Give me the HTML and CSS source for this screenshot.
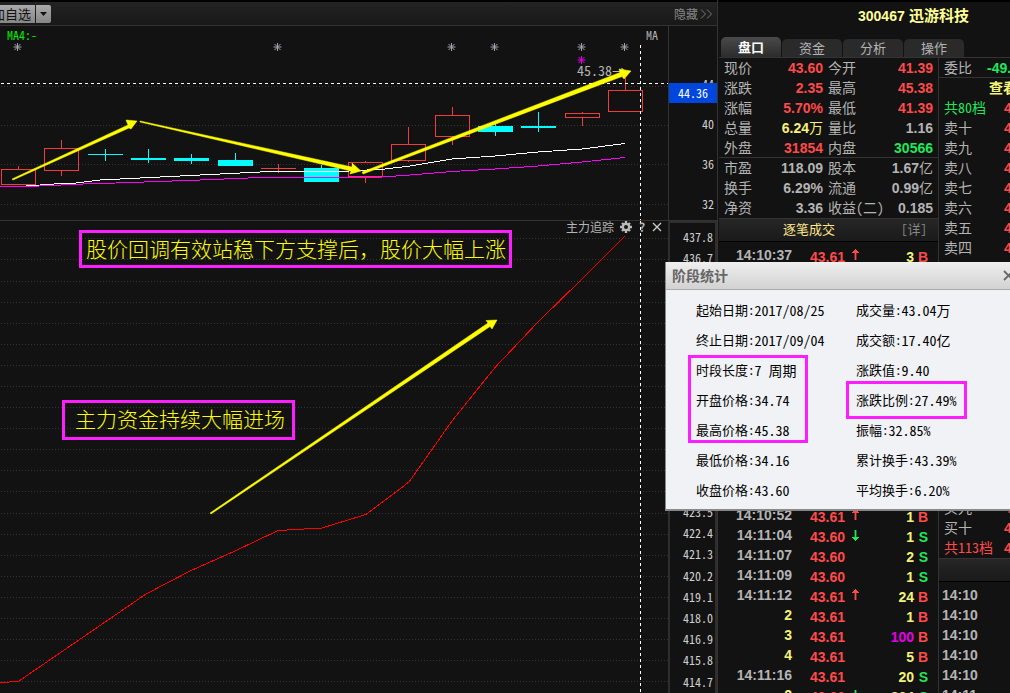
FILE: index.html
```html
<!DOCTYPE html>
<html lang="zh-CN">
<head>
<meta charset="utf-8">
<title>300467 迅游科技</title>
<link rel="stylesheet" href="styles.css">
</head>
<body>
<div class="app">
  <main class="charts">
    <header class="toolbar">
      <div class="fav">
        <button class="btn fav-add">加自选</button><button class="btn fav-more" aria-label="更多"><svg width="7" height="4" viewBox="0 0 7 4"><path d="M0 0h7L3.500 4z" fill="#111"/></svg></button>
      </div>
      <button class="hide-btn">隐藏<svg width="13" height="10" viewBox="0 0 13 10" fill="none" stroke="#777"><path d="M1 0.500 5.500 5 1 9.500M7 0.500 11.500 5 7 9.500"/></svg></button>
    </header>

    <section class="panel price">
      <div class="plot">
        <svg class="canvas" viewBox="0 26 668 194" preserveAspectRatio="xMinYMin slice">
          <defs>
            <g id="star" fill="none"><path d="M0-4V4M-4 0H4M-3-3 3 3M3-3-3 3"/></g>
          </defs>
          <g class="grid"><path d="M1 86.500H668M1 125.500H668M1 164.500H668M1 204.500H668"/></g>
          <g stroke="#a0a4aa" stroke-width="1">
            <use href="#star" x="17.500" y="47"/><use href="#star" x="277.500" y="47"/><use href="#star" x="451.500" y="47"/><use href="#star" x="494.500" y="47"/><use href="#star" x="581.500" y="47"/><use href="#star" x="624.500" y="47"/>
          </g>
          <use href="#star" x="581.500" y="60" stroke="#e000e0"/>
          <g class="up">
            <path d="M18.500 166V169M61.500 140V148M61.500 171V176M278.500 164V173M365.500 161V162M365.500 177V183M408.500 127V144M408.500 161V162M452.500 107V115M452.500 137V145M582.500 112V113M582.500 118V126M625.500 78V90M261 168.500H296"/>
            <path d="M1.500 169.500h34v15h-34zM44.500 148.500h34v22h-34zM348.500 162.500h34v14h-34zM391.500 144.500h34v16h-34zM435.500 115.500h34v21h-34zM565.500 113.500h34v4h-34zM608.500 90.500h34v21h-34z"/>
          </g>
          <g class="down">
            <path d="M105 149h1v12h-1zM88 154h35v1H88zM148 149h1v14h-1zM131 158h35v2h-35zM191 154h1v10h-1zM174 158h35v3h-35zM235 153h1v8h-1zM218 160h35v6h-35zM321 165h1v4h-1zM304 168h35v14h-35zM495 124h1v12h-1zM478 126h35v6h-35zM538 112h1v20h-1zM521 126h35v2h-35z"/>
          </g>
          <path class="ma white" d="M26 186 54 184 76 183 100 180 180 176 270 171.500 305 171.500 340 171.500 385 169 410 166 452 159 495 156 538 152 582 149 625 143.500"/>
          <path class="ma pink" d="M0 186.500 28 186.500 83 184 116 183 200 180 260 177.500 375 177.500 410 175 452 171.500 495 169 538 166 582 162 625 157.500"/>
          <path class="cross" d="M1 83.500H668M640.500 45V220"/>
          <text class="peak" x="577" y="76">45.38→</text>
          <g class="arrow">
            <path d="M12 179 128 125 126 120 137 121 131 129 129 128 13 180Z"/>
            <path d="M140 121 352 167 352 163 361 171 350 174 351 171 140 122Z"/>
            <path d="M362 172 620 72.500 619 69 631 71 624 79 622 76.500 363 174Z"/>
          </g>
        </svg>
        <span class="ma-label">MA4:-</span>
        <span class="ma-menu">MA</span>
      </div>
      <div class="axis price-axis">
        <span class="tick">44</span><span class="tick">40</span><span class="tick">36</span><span class="tick">32</span>
        <span class="cursor-price">44.36</span>
      </div>
    </section>

    <section class="panel tracker">
      <div class="plot">
        <svg class="canvas" viewBox="0 221 668 472" preserveAspectRatio="xMinYMin slice">
          <g class="grid"><path d="M1 238.500H668M1 259.500H668M1 281.500H668M1 302.500H668M1 323.500H668M1 344.500H668M1 365.500H668M1 386.500H668M1 407.500H668M1 428.500H668M1 449.500H668M1 470.500H668M1 491.500H668M1 513.500H668M1 534.500H668M1 555.500H668M1 576.500H668M1 597.500H668M1 618.500H668M1 639.500H668M1 660.500H668M1 681.500H668"/></g>
          <path class="flow" d="M0 683 19 681 146 594 190 571 235 551 278 530.500 322 528 366 514.500 409 482 452 421 495 367.500 538 322 582 279 625 236"/>
          <path class="cross" d="M640.500 221V693"/>
          <g class="arrow"><path d="M210 513 488 323 486 320.500 497 320 492 329 490 326.500 211 514Z"/></g>
        </svg>
        <div class="tools">
          <span>主力追踪</span>
          <button class="icon" aria-label="设置"><svg width="12" height="12" viewBox="-6 -6 12 12"><g stroke="#bbb" stroke-width="2.400"><path d="M0-6V6M-6 0H6M-4-4 4 4M4-4-4 4"/></g><circle r="3.100" fill="#151515" stroke="#bbb" stroke-width="2.200"/></svg></button>
          <button class="icon help" aria-label="帮助">?</button>
          <button class="icon" aria-label="关闭"><svg width="10" height="10" viewBox="0 0 10 10"><path d="M1 1 9 9M9 1 1 9" stroke="#ccc" stroke-width="1.300"/></svg></button>
        </div>
        <p class="note note-top">股价回调有效站稳下方支撑后，股价大幅上涨</p>
        <p class="note note-mid">主力资金持续大幅进场</p>
      </div>
      <div class="axis tracker-axis">
        <span>437.8</span><span>436.7</span><span>435.6</span><span>434.5</span><span>433.4</span><span>432.3</span><span>431.2</span><span>430.1</span><span>429.0</span><span>427.9</span><span>426.8</span><span>425.7</span><span>424.6</span><span>423.5</span><span>422.4</span><span>421.3</span><span>420.2</span><span>419.1</span><span>418.0</span><span>416.9</span><span>415.8</span><span>414.7</span>
      </div>
    </section>
  </main>

  <aside class="side">
    <h1 class="stock"><span>300467</span> 迅游科技</h1>
    <nav class="tabs">
      <button class="tab active">盘口</button><button class="tab">资金</button><button class="tab">分析</button><button class="tab">操作</button>
    </nav>
    <div class="cols">
      <section class="quote">
        <dl class="facts">
          <dt>现价</dt><dd class="r">43.60</dd><dt>今开</dt><dd class="r">41.39</dd>
          <dt>涨跌</dt><dd class="r">2.35</dd><dt>最高</dt><dd class="r">45.38</dd>
          <dt>涨幅</dt><dd class="r">5.70%</dd><dt>最低</dt><dd class="r">41.39</dd>
          <dt>总量</dt><dd class="y">6.24<i>万</i></dd><dt>量比</dt><dd>1.16</dd>
          <dt>外盘</dt><dd class="r">31854</dd><dt>内盘</dt><dd class="g">30566</dd>
        </dl>
        <dl class="facts more">
          <dt>市盈</dt><dd>118.09</dd><dt>股本</dt><dd>1.67<i>亿</i></dd>
          <dt>换手</dt><dd>6.29%</dd><dt>流通</dt><dd>0.99<i>亿</i></dd>
          <dt>净资</dt><dd>3.36</dd><dt>收益(二)</dt><dd>0.185</dd>
        </dl>
        <div class="band"><h2>逐笔成交</h2><a href="#">[详]</a></div>
        <table class="ticks">
          <tr><td class="time">14:10:37</td><td class="r">43.61</td><td class="r dir"><svg class="dir-up" width="7" height="12"><use href="#dir"/></svg></td><td class="y num">3</td><td class="r">B</td></tr>
          <tr class="covered"><td colspan="5"></td></tr>
          <tr><td class="time">14:10:52</td><td class="r">43.61</td><td class="r dir"><svg class="dir-up" width="7" height="12"><use href="#dir"/></svg></td><td class="y num">1</td><td class="r">B</td></tr>
          <tr><td class="time">14:11:04</td><td class="r">43.60</td><td class="g dir"><svg class="dir-down" width="7" height="12"><use href="#dir"/></svg></td><td class="y num">1</td><td class="g">S</td></tr>
          <tr><td class="time">14:11:07</td><td class="r">43.60</td><td></td><td class="y num">2</td><td class="g">S</td></tr>
          <tr><td class="time">14:11:09</td><td class="r">43.60</td><td></td><td class="y num">1</td><td class="g">S</td></tr>
          <tr><td class="time">14:11:12</td><td class="r">43.61</td><td class="r dir"><svg class="dir-up" width="7" height="12"><use href="#dir"/></svg></td><td class="y num">24</td><td class="r">B</td></tr>
          <tr><td class="time y">2</td><td class="r">43.61</td><td></td><td class="y num">1</td><td class="r">B</td></tr>
          <tr><td class="time y">3</td><td class="r">43.61</td><td></td><td class="m num">100</td><td class="r">B</td></tr>
          <tr><td class="time y">4</td><td class="r">43.61</td><td></td><td class="y num">5</td><td class="r">B</td></tr>
          <tr><td class="time">14:11:16</td><td class="r">43.61</td><td></td><td class="y num">20</td><td class="g">S</td></tr>
          <tr><td class="time y">2</td><td class="r">43.60</td><td class="g dir"><svg class="dir-down" width="7" height="12"><use href="#dir"/></svg></td><td class="y num">264</td><td class="g">S</td></tr>
        </table>
        <svg width="0" height="0" class="defs"><defs><path id="dir" d="M3 0h1v1H3zM2 1h3v1H2zM1 2h5v1H1zM0 3h7v1H0zM2.600 4h1.800v7H2.600z" fill="currentColor"/></defs></svg>
      </section>
      <section class="book">
        <div class="ratio"><span>委比</span><b class="g">-49.21%</b></div>
        <div class="view"><a href="#" class="y">查看</a></div>
        <dl class="levels">
          <dt class="g">共80档</dt><dd>43.60</dd>
          <dt>卖十</dt><dd>43.60</dd><dt>卖九</dt><dd>43.60</dd><dt>卖八</dt><dd>43.60</dd><dt>卖七</dt><dd>43.60</dd><dt>卖六</dt><dd>43.60</dd><dt>卖五</dt><dd>43.60</dd><dt>卖四</dt><dd>43.60</dd>
        </dl>
        <dl class="levels buys">
          <dt>买九</dt><dd>43.60</dd><dt>买十</dt><dd>43.60</dd><dt class="r">共113档</dt><dd>43.60</dd>
        </dl>
        <div class="band"></div>
        <ul class="stamps"><li>14:10</li><li>14:10</li><li>14:10</li><li>14:10</li><li>14:10</li><li>14:11</li></ul>
      </section>
    </div>
  </aside>

  <div class="dialog" role="dialog" aria-label="阶段统计">
    <header class="dialog-head"><h2>阶段统计</h2><button class="icon" aria-label="关闭"><svg width="11" height="11" viewBox="0 0 11 11"><path d="M1 1 10 10M10 1 1 10" stroke="#666" stroke-width="1.800"/></svg></button></header>
    <div class="stats">
      <dl>
        <div><dt>起始日期:</dt><dd>2017/08/25</dd></div><div><dt>终止日期:</dt><dd>2017/09/04</dd></div><div><dt>时段长度:</dt><dd>7 周期</dd></div><div><dt>开盘价格:</dt><dd>34.74</dd></div><div><dt>最高价格:</dt><dd>45.38</dd></div><div><dt>最低价格:</dt><dd>34.16</dd></div><div><dt>收盘价格:</dt><dd>43.60</dd></div>
      </dl>
      <dl>
        <div><dt>成交量:</dt><dd>43.04万</dd></div><div><dt>成交额:</dt><dd>17.40亿</dd></div><div><dt>涨跌值:</dt><dd>9.40</dd></div><div><dt>涨跌比例:</dt><dd>27.49%</dd></div><div><dt>振幅:</dt><dd>32.85%</dd></div><div><dt>累计换手:</dt><dd>43.39%</dd></div><div><dt>平均换手:</dt><dd>6.20%</dd></div>
      </dl>
    </div>
    <div class="mark mark-left"></div>
    <div class="mark mark-right"></div>
  </div>
</div>
</body>
</html>
```

FILE: styles.css
```css
* { box-sizing: border-box; }
body, h1, h2, p, dl, dd, ul { margin: 0; padding: 0; }
body {
  background: #121212;
  color: #b4b4b4;
  font-family: "Liberation Sans", "Noto Sans CJK SC", sans-serif;
  font-size: 14px;
}
button { border: 0; padding: 0; background: none; color: inherit; font: inherit; }
a { color: inherit; text-decoration: none; }
h1, h2 { font-size: 14px; }
i { font-style: normal; font-weight: 400; }

.app { position: relative; display: flex; height: 100vh; overflow: hidden; }
.charts { flex: 1; min-width: 0; display: flex; flex-direction: column; border-right: 1px solid #333; }
.side { flex: 0 0 292px; overflow: hidden; border-top: 2px solid #000; border-left: 1px solid #121212; }

.r { color: #ff4a4a; }
.g { color: #22e65a; }
.y { color: #f5f27a; }
.m { color: #e600e6; }

/* toolbar */
.toolbar {
  flex: none;
  display: flex;
  justify-content: space-between;
  align-items: center;
  height: 26px;
  border-top: 2px solid #000;
  border-bottom: 1px solid #333;
  background: linear-gradient(#232323, #181818);
  font-family: "Noto Sans CJK SC", sans-serif;
}
.fav { display: flex; gap: 1px; margin-left: -6px; }
.btn { height: 18px; background: linear-gradient(#aaa, #868686); color: #111; font-size: 13px; line-height: 18px; }
.fav-add { width: 41px; overflow: hidden; white-space: nowrap; direction: rtl; padding-right: 4px; }
.fav-more { display: grid; place-items: center; width: 15px; border-radius: 0 2px 2px 0; }
.hide-btn { display: flex; align-items: center; gap: 2px; margin-right: 4px; color: #888; font-size: 12px; }

/* chart panels */
.panel { display: flex; min-height: 0; }
.price { flex: none; height: 194px; }
.tracker { flex: 1; border-top: 1px solid #333; }
.plot { position: relative; flex: 1; min-width: 0; }
.canvas { position: absolute; inset: 0; width: 100%; height: 100%; }
.grid { fill: none; stroke: #343434; stroke-width: 1; stroke-dasharray: 1 2; shape-rendering: crispEdges; }
.up { fill: none; stroke: #f03c3c; shape-rendering: crispEdges; }
.down { fill: #00ffff; shape-rendering: crispEdges; }
.ma { fill: none; stroke-width: 1; shape-rendering: crispEdges; }
.white { stroke: #fff; }
.pink { stroke: #ff00ff; }
.cross { fill: none; stroke: #fff; stroke-dasharray: 3 3; shape-rendering: crispEdges; }
.flow { fill: none; stroke: #f00; shape-rendering: crispEdges; }
.arrow { fill: #ff0; stroke: #ff0; stroke-width: 0.500; }
.peak { fill: #b4b4b4; font: 14px "Noto Sans CJK SC", sans-serif; font-feature-settings: "hwid"; }
.ma-label, .ma-menu { position: absolute; top: 0; font: 12px/18px "Noto Sans CJK SC", sans-serif; font-feature-settings: "hwid"; }
.ma-label { left: 7px; color: #00f000; }
.ma-menu { right: 10px; }

.axis {
  flex: 0 0 49px;
  display: flex;
  flex-direction: column;
  color: #d0d0d0;
  font: 12px/16px "Noto Sans CJK SC", sans-serif;
  font-feature-settings: "hwid";
  text-align: right;
}
.price-axis { position: relative; padding: 50px 3px 0 0; gap: 24px; border-left: 1px solid #333; }
.cursor-price { position: absolute; inset: 57px 0 auto 0; height: 20px; padding-right: 9px; background: #0046dc; color: #fff; line-height: 20px; }
.tracker-axis { padding: 3px 2px 1px 0; border: 2px solid #2e2e2e; border-bottom: 0; }
.tracker-axis span { flex: 1; display: flex; align-items: center; justify-content: flex-end; }

.tools { position: absolute; top: -3px; right: 6px; display: flex; align-items: center; gap: 6px; height: 18px; font: 12px/18px "Noto Sans CJK SC", sans-serif; }
.icon { display: grid; place-items: center; }
.help { width: 8px; font-weight: 700; }
.note { position: absolute; border: 3px solid #ff1eff; color: #ff0; font: 300 21px/30px "Noto Sans CJK SC", sans-serif; white-space: nowrap; }
.note-top { left: 79px; top: 9px; padding: 0 3px 2px 4px; }
.note-mid { left: 62px; top: 179px; padding: 0 7px 4px 10px; }

/* right side */
.stock { padding: 4px 0 0 139px; height: 35px; color: #ffff96; font-size: 15px; line-height: 20px; white-space: nowrap; }
.stock span { font-size: 14px; }
.tabs { display: flex; align-items: flex-end; gap: 1px; height: 21px; padding-left: 2px; border-bottom: 1px solid #333; }
.tab { width: 60px; height: 18px; border-radius: 5px 5px 0 0; background: #2a2a2a; font: 13px/16px "Noto Sans CJK SC", sans-serif; }
.tab.active { height: 20px; background: linear-gradient(#4a4a4a, #2c2c2c); color: #fff; font-weight: 700; }
.cols { display: flex; }
.quote { flex: 0 0 220px; border-right: 1px solid #333; }
.facts { display: grid; grid-template-columns: 28px 71px 5px 56px 49px; grid-auto-rows: 20px; height: 100px; padding: 0 5px; border-bottom: 1px solid #333; line-height: 18px; }
.facts dt:nth-of-type(even) { grid-column: 4; }
.facts dt { font-family: "Noto Sans CJK SC", sans-serif; font-feature-settings: "hwid"; white-space: nowrap; }
.facts dd { padding-top: 1px; font-weight: 700; text-align: right; }
.facts.more { height: 61px; }
.band { display: flex; align-items: center; height: 23px; padding-bottom: 2px; border-bottom: 1px solid #000; background: linear-gradient(#262626, #1a1a1a); font: 13px/18px "Noto Sans CJK SC", sans-serif; }
.band h2 { margin-left: 64px; color: #ffe68c; font-size: 13px; font-weight: 400; }
.band a { margin: 0 11px 0 auto; color: #888; font-feature-settings: "hwid"; }
.ticks { width: 219px; margin-top: 4px; border-collapse: collapse; table-layout: fixed; font-weight: 700; }
.ticks td { height: 20px; padding: 2px 0 0; line-height: 18px; text-align: right; }
.ticks td:nth-child(1) { width: 73px; }
.ticks td:nth-child(2) { width: 53px; }
.ticks td:nth-child(3) { width: 14px; }
.ticks td:nth-child(4) { width: 55px; }
.ticks td:nth-child(5) { padding-right: 10px; }
.ticks td.time, .ticks td.dir { padding: 0 0 2px; }
.ticks .covered td { height: 240px; }
.dir svg { display: block; margin-left: auto; }
.dir-down { transform: rotate(180deg); }
.defs { display: block; }

.book { flex: 1; min-width: 0; overflow: hidden; white-space: nowrap; line-height: 18px; }
.ratio, .view { display: flex; height: 20px; padding-left: 5px; font-family: "Noto Sans CJK SC", sans-serif; }
.ratio { gap: 15px; border-bottom: 1px solid #333; }
.ratio b { padding-top: 1px; font-family: "Liberation Sans", sans-serif; }
.view a { margin-left: 45px; font-weight: 700; }
.levels { display: grid; grid-template-columns: 60px auto; grid-auto-rows: 20px; padding-left: 5px; }
.levels dt { font-family: "Noto Sans CJK SC", sans-serif; font-feature-settings: "hwid"; }
.levels dd { padding-top: 1px; color: #ff4a4a; font-weight: 700; }
.buys { margin-top: 240px; border-bottom: 1px solid #333; }
.stamps { padding: 3px 0 0 3px; list-style: none; font-weight: 700; line-height: 20px; }

/* statistics dialog */
.dialog { position: absolute; top: 262px; left: calc(100% - 345px); width: 354px; border: 1px solid #888; border-width: 0 0 2px 1px; background: #f0f2f5; color: #000; }
.dialog-head { display: flex; align-items: center; justify-content: space-between; height: 28px; padding: 0 5px 1px 6px; border-bottom: 1px solid #aaa; background: linear-gradient(#efefef, #d2d2d2); color: #666; }
.dialog-head h2 { font-family: "Noto Sans CJK SC", sans-serif; line-height: 24px; }
.stats { display: grid; grid-template-columns: 160px auto; padding: 5px 0 4px 30px; font: 13px/30px "Noto Sans CJK SC", sans-serif; font-feature-settings: "hwid"; }
.stats dl > div { display: flex; height: 30px; }
.stats dd { font-size: 14px; }
.mark { position: absolute; border: 3px solid #ff1eff; }
.mark-left { left: 22px; top: 93px; width: 120px; height: 88px; }
.mark-right { left: 180px; top: 119px; width: 121px; height: 38px; }
```
